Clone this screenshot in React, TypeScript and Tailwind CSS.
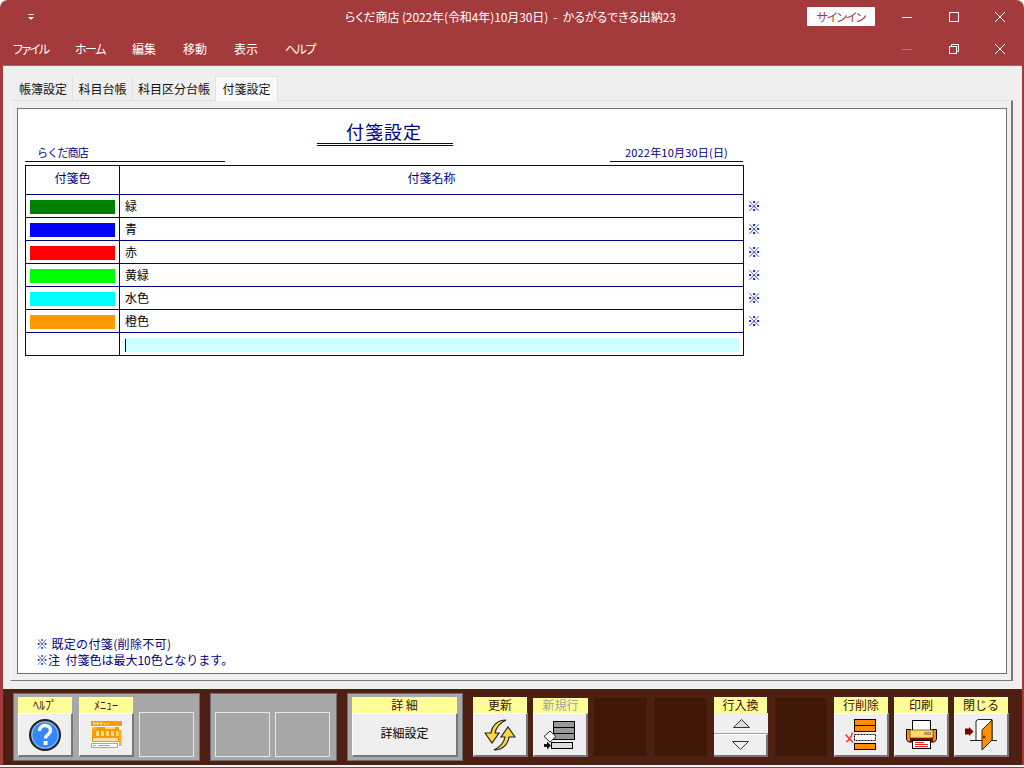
import type { ReactNode } from "react";

const rows = [
  { name: "緑", color: "bg-[#008000]" },
  { name: "青", color: "bg-[#0000ff]" },
  { name: "赤", color: "bg-[#ff0000]" },
  { name: "黄緑", color: "bg-[#00ff00]" },
  { name: "水色", color: "bg-[#00ffff]" },
  { name: "橙色", color: "bg-[#ff9900]" },
];

function HelpIcon() {
  return (
    <svg width="32" height="32" viewBox="0 0 32 32">
      <circle cx="16" cy="16" r="15" fill="#3388ff" stroke="#222" strokeWidth="2" />
      <circle cx="16" cy="16" r="13.2" fill="none" stroke="#ccc" strokeWidth="0.8" />
      <path d="M10.5 12c0-3.5 2.5-5.5 5.5-5.5s5.5 2 5.5 5c0 4-5 4-5 8" fill="none" stroke="#fff" strokeWidth="3.4" />
      <rect x="14.5" y="22" width="4" height="4" fill="#fff" />
    </svg>
  );
}

function MenuIcon() {
  return (
    <svg width="31" height="27" viewBox="0 0 31 27">
      <rect x="0" y="0" width="31" height="27" fill="#fff" />
      <rect x="0" y="0" width="31" height="5" fill="#ff9900" />
      <rect x="2" y="1.500" width="2.500" height="2" fill="#ffe6b0" />
      <rect x="5.500" y="1.500" width="2.500" height="2" fill="#ffe6b0" />
      <rect x="9" y="1.500" width="2.500" height="2" fill="#ffe6b0" />
      <rect x="13" y="2" width="1.500" height="1.500" fill="#ffe6b0" />
      <rect x="16" y="2" width="1.500" height="1.500" fill="#ffe6b0" />
      <rect x="1" y="6" width="27" height="10" fill="#ff9900" />
      <rect x="1" y="6" width="5" height="3" fill="#ffb030" />
      <rect x="14" y="6" width="10" height="2" fill="#ffe080" />
      <rect x="5" y="10" width="3" height="5" fill="#ffe080" />
      <rect x="10" y="10" width="3" height="5" fill="#ffe080" />
      <rect x="15" y="10" width="3" height="5" fill="#ffe080" />
      <rect x="20" y="10" width="3" height="5" fill="#ffe080" />
      <rect x="25" y="10" width="2.500" height="5" fill="#ffe080" />
      <rect x="1" y="16" width="27" height="5" fill="#ff9900" />
      <rect x="2" y="17" width="25" height="3" fill="#ffe0b0" />
      <rect x="28" y="9" width="2.500" height="16" fill="#ffa820" />
      <rect x="0" y="22" width="27" height="5" fill="#ff9900" />
      <rect x="1" y="23" width="25" height="3" fill="#fff" />
      <rect x="2" y="24" width="3" height="1" fill="#ff9900" />
      <rect x="7" y="24" width="12" height="1" fill="#ff9900" />
    </svg>
  );
}

function SyncIcon() {
  return (
    <svg width="32" height="32" viewBox="0 0 32 32">
      <path d="M22 1C13 1 8 7 7 14H1l7 10 7-10h-4C12 8 16 4 22 1Z" fill="#ffd83c" stroke="#222" strokeWidth="1.2" />
      <path d="M10 31c9 0 14-6 15-13h6L24 8l-7 10h4c-1 6-5 10-11 13Z" fill="#ffd83c" stroke="#222" strokeWidth="1.2" />
    </svg>
  );
}

function NewRowIcon() {
  return (
    <svg width="32" height="30" viewBox="0 0 32 30">
      <rect x="9.500" y="1.500" width="21" height="6" fill="#999" stroke="#000" />
      <rect x="9.500" y="7.500" width="21" height="6" fill="#999" stroke="#000" />
      <rect x="9.500" y="13.500" width="21" height="6" fill="#999" stroke="#000" />
      <path d="M6 11l6 5.500-6 5.500-6-5.500Z" fill="#fff" stroke="#222" />
      <rect x="7.500" y="22.500" width="21" height="6" fill="#ddd" stroke="#000" />
      <path d="M0 24h3v-2.500l4 4-4 4V27H0Z" fill="#111" />
    </svg>
  );
}

function DeleteRowIcon() {
  return (
    <svg width="32" height="32" viewBox="0 0 32 32">
      <rect x="9.500" y="0.500" width="21" height="6" fill="#ff8c00" stroke="#000" />
      <rect x="9.500" y="6.500" width="21" height="6" fill="#ff8c00" stroke="#000" />
      <rect x="9.500" y="15.500" width="21" height="6" fill="#fff" stroke="#000" strokeDasharray="2 1" />
      <rect x="9.500" y="24.500" width="21" height="6" fill="#ff8c00" stroke="#000" />
      <path d="M0.500 15.500l7.500 8M7.500 13.500c-1 4-4 8-6.500 9.500" stroke="#ff3030" strokeWidth="1.400" fill="none" />
    </svg>
  );
}

function PrinterIcon() {
  return (
    <svg width="31" height="29" viewBox="0 0 31 29">
      <rect x="6.500" y="0.500" width="18" height="10" fill="#fff" stroke="#000" />
      <path d="M0.500 9.500h4v1h22v-1h4v10l-2 2.500h-26l-2-2.500Z" fill="#ff9000" stroke="#000" />
      <rect x="4" y="10" width="23" height="8" fill="#ffdc60" stroke="#000" strokeWidth="0.5" />
      <rect x="18" y="12" width="7" height="3" fill="#b09858" />
      <rect x="4" y="18" width="23" height="4" fill="#800000" />
      <rect x="6.500" y="20.500" width="18" height="8" fill="#fff" stroke="#000" />
      <rect x="9" y="22" width="9" height="1" fill="#ee2020" />
      <rect x="9" y="24" width="13" height="1" fill="#ee2020" />
      <rect x="9" y="26" width="13" height="1" fill="#ee2020" />
    </svg>
  );
}

function DoorIcon() {
  return (
    <svg width="33" height="32" viewBox="0 0 33 32">
      <path d="M0 9.500h4V8l4.500 4.500L4 17v-1.500H0Z" fill="#800000" />
      <path d="M11 21.500V2l2-1.500h14v21" fill="#fff" stroke="#222" />
      <path d="M5 21.500h27" stroke="#222" />
      <path d="M17 11l10-10v20L17 31Z" fill="#ff9000" stroke="#222" />
      <path d="M17.500 18h3M19 16.500v3" stroke="#a00000" strokeWidth="1.200" />
    </svg>
  );
}

function Triangle({ down }: { down?: boolean }) {
  return (
    <svg width="17" height="9" viewBox="0 0 17 9">
      <path d={down ? "M0.500 0.500h16l-8 8Z" : "M8.500 0.500l8 8H0.500Z"} fill={down ? "#efefef" : "#ddd"} stroke="#333" />
    </svg>
  );
}

function Btn({ label, children, muted }: { label: string; children?: ReactNode; muted?: boolean }) {
  return (
    <div className="flex h-[60px] w-[55px] flex-col">
      <div
        className={
          muted
            ? "mt-px h-[15px] bg-[#ffff99] text-center text-[12px] leading-[14px] text-[#a0a0a0]"
            : "h-[16px] w-[54px] bg-[#ffff99] text-center text-[12px] leading-[15px] text-[#401000]"
        }
      >
        {label}
      </div>
      <div className="flex h-[44px] items-center justify-center border-t border-l border-white border-r-2 border-b-2 border-r-[#777777] border-b-[#777777] bg-[#efefef]">
        {children}
      </div>
    </div>
  );
}

function DarkBox({ narrow }: { narrow?: boolean }) {
  return <div className={narrow ? "h-[60px] w-[54px] border border-[#551f10] bg-[#3f1808]" : "h-[60px] w-[55px] border border-[#551f10] bg-[#3f1808]"} />;
}

function EmptySlot() {
  return <div className="mt-[15px] h-[45px] w-[55px] border border-[#e6e6e6]" />;
}

export default function App() {
  return (
    <div className="flex h-[768px] w-[1024px] flex-col overflow-hidden rounded-t-lg bg-[#a33a3c] [font-family:'Noto_Sans_CJK_JP','Liberation_Sans',sans-serif] text-[12px]">
      {/* title bar */}
      <div className="flex h-[33px] flex-none items-center text-white">
        <div className="flex w-[345px] pl-[27px]">
          <svg width="8" height="8" viewBox="0 0 8 8">
            <path d="M1.500 1.500h5" stroke="#fff" />
            <path d="M1 4h6L4 7Z" fill="#fff" />
          </svg>
        </div>
        <div className="w-[332px] whitespace-nowrap text-[12px] tracking-[-0.1px] [font-feature-settings:'palt']">
          らくだ商店 (2022年(令和4年)10月30日) &nbsp;-&nbsp; かるがるできる出納23
        </div>
        <div className="ml-[130px] flex h-[19px] w-[68px] items-center justify-center rounded-[1px] bg-white text-[12px] tracking-[-1px] text-[#a33a3c] [font-feature-settings:'palt']">
          サインイン
        </div>
        <div className="ml-[9px] flex w-[46px] justify-center">
          <svg width="10" height="10" viewBox="0 0 10 10">
            <path d="M0 5.500h10" stroke="#fff" />
          </svg>
        </div>
        <div className="flex w-[47px] justify-center">
          <svg width="10" height="10" viewBox="0 0 10 10">
            <rect x="0.500" y="0.500" width="9" height="9" fill="none" stroke="#fff" />
          </svg>
        </div>
        <div className="flex w-[46px] justify-center">
          <svg width="10" height="10" viewBox="0 0 10 10">
            <path d="M0 0l10 10M10 0L0 10" stroke="#fff" />
          </svg>
        </div>
      </div>

      {/* menu bar */}
      <div className="flex h-[32px] flex-none items-center pl-[13px] text-white [font-feature-settings:'palt']">
        <div className="w-[62px] tracking-[-1.5px]">ファイル</div>
        <div className="w-[57px] tracking-[-1.5px]">ホーム</div>
        <div className="w-[51px]">編集</div>
        <div className="w-[51px]">移動</div>
        <div className="w-[51px]">表示</div>
        <div className="w-[49px] tracking-[-1.5px]">ヘルプ</div>
        <div className="ml-[550px] flex w-[46px] justify-center">
          <svg width="10" height="10" viewBox="0 0 10 10">
            <path d="M0 5.500h10" stroke="#c97070" />
          </svg>
        </div>
        <div className="flex w-[47px] justify-center">
          <svg width="10" height="10" viewBox="0 0 10 10">
            <rect x="0.500" y="2.500" width="7" height="7" fill="none" stroke="#fff" />
            <path d="M2.500 2.500v-2h7v7h-2" fill="none" stroke="#fff" />
          </svg>
        </div>
        <div className="flex w-[46px] justify-center">
          <svg width="10" height="10" viewBox="0 0 10 10">
            <path d="M0 0l10 10M10 0L0 10" stroke="#fff" />
          </svg>
        </div>
      </div>

      {/* content */}
      <div className="ml-[3px] mr-[2px] flex h-[624px] flex-none flex-col border-t border-[#777777] bg-[#efefef] pt-[10px] pl-[7px] pr-[9px]">
        <div className="relative z-10 -mb-px flex h-[25px] flex-none pl-[4px] text-[#111111]">
          <div className="flex h-[24px] w-[59px] items-end justify-center border-r border-[#e2e2e2] pb-[2px]">帳簿設定</div>
          <div className="flex h-[24px] w-[60px] items-end justify-center border-r border-[#e2e2e2] pb-[2px]">科目台帳</div>
          <div className="flex h-[24px] w-[83px] items-end justify-center border-r border-[#e2e2e2] pb-[2px]">科目区分台帳</div>
          <div className="flex h-[25px] w-[62px] items-center justify-center border-t border-r border-[#e2e2e2] bg-[#f9f9f9]">付箋設定</div>
        </div>

        <div className="flex h-[581px] flex-none flex-col border-t border-t-[#e0e0e0] border-l border-l-[#f8f8f8] border-r-2 border-r-[#777777] border-b border-b-[#777777] pt-[7px] pl-[6px] pr-[4px] pb-[6px]">
          <div className="flex flex-1 flex-col border border-[#707070] bg-white pl-[7px] text-[#000080]">
            <div className="flex w-[719px] justify-center pt-[13px]">
              <div className="h-[24px] w-[136px] border-b-[3px] border-double border-[#000080] pr-[1px] text-center text-[18px] leading-[19px] tracking-[1px]">
                付箋設定
              </div>
            </div>

            <div className="flex h-[16px] w-[718px] justify-between text-[12px] leading-[12px]">
              <div className="w-[200px] border-b border-[#000080] pl-[12px] text-[11px] leading-[13px] tracking-[-0.8px]">らくだ商店</div>
              <div className="w-[133px] border-b border-[#000080] text-center text-[11px] leading-[13px] tracking-[0.2px]">2022年10月30日(日)</div>
            </div>

            <div className="mt-[3px] flex flex-col">
              <div className="flex h-[30px]">
                <div className="flex w-[719px] border border-[#000080] leading-[24px]">
                  <div className="w-[94px] border-r border-[#000080] text-center">付箋色</div>
                  <div className="flex-1 text-center">付箋名称</div>
                </div>
              </div>
              {rows.map((row) => (
                <div key={row.name} className="flex h-[23px]">
                  <div className="flex w-[719px] border-x border-b border-[#000080] text-black">
                    <div className="flex w-[94px] justify-center border-r border-[#000080] pt-[5px]">
                      <div className={"h-[14px] w-[85px] " + row.color} />
                    </div>
                    <div className="flex-1 pl-[5px] leading-[21px]">{row.name}</div>
                  </div>
                  <div className="ml-[3px] text-[14px] leading-[21px]">※</div>
                </div>
              ))}
              <div className="flex h-[23px] w-[719px] border-x border-b border-[#000080]">
                <div className="w-[94px] border-r border-[#000080]" />
                <div className="flex flex-1 px-[4px] pt-[5px]">
                  <div className="flex h-[14px] flex-1 items-center bg-[#ccffff] pl-[1px]">
                    <div className="h-[13px] w-px bg-black" />
                  </div>
                </div>
              </div>
            </div>

            <div className="mt-auto pb-[5px] pl-[11px] leading-[16px]">
              <div className="tracking-[0.35px]">※ 既定の付箋(削除不可)</div>
              <div>※注&nbsp;&nbsp;付箋色は最大10色となります。</div>
            </div>
          </div>
        </div>
      </div>

      {/* toolbar */}
      <div className="ml-[3px] mr-[2px] flex h-[76px] flex-none items-center bg-[#4e2014] pl-[10px]">
        <div className="h-[68px] w-[187px] border border-[#6f6f6f] bg-[#a8a8a8] pt-[3px] pl-[4px]">
          <div className="flex">
            <Btn label="ﾍﾙﾌﾟ">
              <HelpIcon />
            </Btn>
            <div className="ml-[6px]">
              <Btn label="ﾒﾆｭｰ">
                <MenuIcon />
              </Btn>
            </div>
            <div className="ml-[5px]">
              <EmptySlot />
            </div>
          </div>
        </div>

        <div className="ml-[10px] h-[68px] w-[127px] border border-[#6f6f6f] bg-[#a8a8a8] pt-[3px] pl-[4px]">
          <div className="flex gap-[6px]">
            <EmptySlot />
            <div className="-ml-px">
              <EmptySlot />
            </div>
          </div>
        </div>

        <div className="ml-[10px] h-[68px] w-[116px] border border-[#6f6f6f] bg-[#a8a8a8] pt-[3px] pl-[4px]">
          <div className="flex h-[60px] w-[106px] flex-col">
            <div className="h-[16px] w-[105px] bg-[#ffff99] text-center leading-[15px] text-[#401000]">詳 細</div>
            <div className="flex h-[44px] items-center justify-center border-t border-l border-white border-r-2 border-b-2 border-r-[#777777] border-b-[#777777] bg-[#efefef] pb-[3px] text-black">
              詳細設定
            </div>
          </div>
        </div>

        <div className="ml-[10px] flex gap-[5px]">
          <Btn label="更新">
            <SyncIcon />
          </Btn>
          <Btn label="新規行" muted>
            <NewRowIcon />
          </Btn>
          <DarkBox />
          <DarkBox />
        </div>

        <div className="ml-[6px] flex h-[60px] w-[54px] flex-col">
          <div className="h-[16px] w-[53px] bg-[#ffff99] text-center leading-[15px] text-[#401000]">行入換</div>
          <div className="flex h-[21px] items-center justify-center border-b border-[#a0a0a0] bg-[#efefef]">
            <Triangle />
          </div>
          <div className="flex h-[23px] items-center justify-center border-t border-white border-r-2 border-b-2 border-r-[#777777] border-b-[#777777] bg-[#efefef]">
            <Triangle down />
          </div>
        </div>

        <div className="ml-[6px]">
          <DarkBox narrow />
        </div>

        <div className="ml-[6px] flex gap-[5px]">
          <Btn label="行削除">
            <DeleteRowIcon />
          </Btn>
          <Btn label="印刷">
            <PrinterIcon />
          </Btn>
          <Btn label="閉じる">
            <DoorIcon />
          </Btn>
        </div>
      </div>

      <div className="h-[2px] flex-none bg-[#f4f4f4]" />
    </div>
  );
}
